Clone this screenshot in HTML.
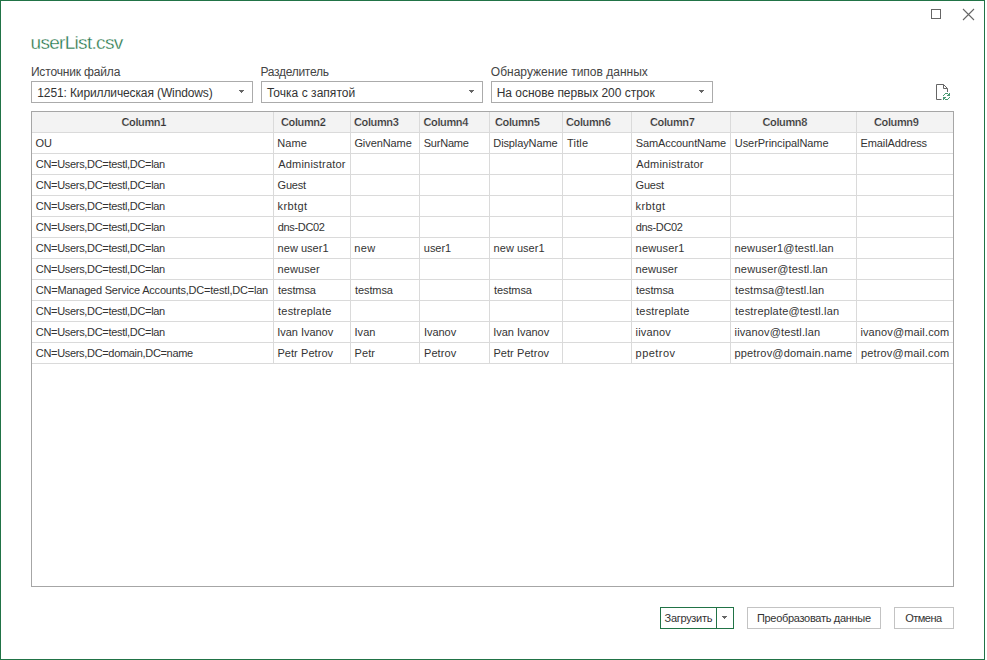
<!DOCTYPE html>
<html><head><meta charset="utf-8"><style>
html,body{margin:0;padding:0;background:#fff;}
body{width:987px;height:660px;position:relative;overflow:hidden;font-family:"Liberation Sans",sans-serif;}
.a{position:absolute;}
.t{position:absolute;white-space:pre;}
.win{left:0;top:0;width:985px;height:660px;box-sizing:border-box;border:1px solid #217346;}
.title{left:30.5px;top:31px;font-size:19px;line-height:24px;letter-spacing:-0.69px;color:#217346;-webkit-text-stroke:0.35px #fff;}
.lbl{font-size:12px;line-height:16px;color:#444;top:64px;}
.dd{top:81px;width:222px;height:22px;box-sizing:border-box;border:1px solid #ababab;background:#fff;}
.ddt{font-size:12px;line-height:16px;color:#333;}
.tbl{left:31px;top:111px;width:923px;height:476px;box-sizing:border-box;border:1px solid #a6a6a6;}
.hd{top:112px;height:20px;background:#f3f3f3;}
.hl{height:1px;background:#dadada;}
.vl{width:1px;background:#dadada;}
.ht{font-size:11px;font-weight:bold;color:#333;line-height:14px;top:115px;-webkit-text-stroke:0.2px #f3f3f3;}
.c{font-size:11px;line-height:14px;color:#333;}
.btn{top:607px;height:22px;box-sizing:border-box;border:1px solid #c3c3c3;background:#fff;}
.bt{font-size:11px;line-height:14px;color:#333;top:611px;}
</style></head><body>
<div class="a win"></div>
<div class="a" style="left:931px;top:9px;width:10px;height:10px;box-sizing:border-box;border:1px solid #666;"></div>
<svg class="a" style="left:962px;top:8px" width="13" height="13" viewBox="0 0 13 13"><path d="M1 1L12 12M12 1L1 12" stroke="#666" stroke-width="1.1" fill="none"/></svg>
<div class="t title">userList.csv</div>

<div class="t lbl" style="left:30.90px;letter-spacing:-0.154px">Источник файла</div>
<div class="a dd" style="left:31px"></div>
<div class="t ddt" style="left:37.30px;top:85px;letter-spacing:-0.118px">1251: Кириллическая (Windows)</div>
<div class="a" style="left:239px;top:90px;width:5px;height:1px;background:#666"></div><div class="a" style="left:240px;top:91px;width:3px;height:1px;background:#666"></div><div class="a" style="left:241px;top:92px;width:1px;height:1px;background:#666"></div>
<div class="t lbl" style="left:260.40px;letter-spacing:-0.270px">Разделитель</div>
<div class="a dd" style="left:261px"></div>
<div class="t ddt" style="left:266.90px;top:85px;letter-spacing:0.036px">Точка с запятой</div>
<div class="a" style="left:469px;top:90px;width:5px;height:1px;background:#666"></div><div class="a" style="left:470px;top:91px;width:3px;height:1px;background:#666"></div><div class="a" style="left:471px;top:92px;width:1px;height:1px;background:#666"></div>
<div class="t lbl" style="left:490.80px;letter-spacing:0.009px">Обнаружение типов данных</div>
<div class="a dd" style="left:491px"></div>
<div class="t ddt" style="left:496.70px;top:85px;letter-spacing:-0.020px">На основе первых 200 строк</div>
<div class="a" style="left:699px;top:90px;width:5px;height:1px;background:#666"></div><div class="a" style="left:700px;top:91px;width:3px;height:1px;background:#666"></div><div class="a" style="left:701px;top:92px;width:1px;height:1px;background:#666"></div>
<svg class="a" style="left:930px;top:80px" width="26" height="24" viewBox="930 80 26 24">
<path d="M941.5 99.5H936.5V84.5H943.5L947.5 88.5V92" stroke="#666" stroke-width="1" fill="none"/>
<path d="M943.5 84.5V88.5H947.5" stroke="#666" stroke-width="1" fill="none"/>
<g fill="#4a9a74" shape-rendering="crispEdges"><rect x="943" y="95" width="1" height="1"/><rect x="944" y="94" width="1" height="1"/><rect x="945" y="93" width="1" height="1"/><rect x="946" y="93" width="1" height="1"/><rect x="947" y="93" width="1" height="1"/><rect x="949" y="93" width="1" height="1"/><rect x="948" y="94" width="1" height="1"/><rect x="949" y="94" width="1" height="1"/><rect x="947" y="95" width="1" height="1"/><rect x="948" y="95" width="1" height="1"/><rect x="949" y="95" width="1" height="1"/><rect x="949" y="97" width="1" height="1"/><rect x="948" y="98" width="1" height="1"/><rect x="947" y="99" width="1" height="1"/><rect x="946" y="99" width="1" height="1"/><rect x="945" y="99" width="1" height="1"/><rect x="943" y="99" width="1" height="1"/><rect x="944" y="98" width="1" height="1"/><rect x="943" y="98" width="1" height="1"/><rect x="945" y="97" width="1" height="1"/><rect x="944" y="97" width="1" height="1"/><rect x="943" y="97" width="1" height="1"/></g>
</svg>
<div class="a tbl"></div>
<div class="a hd" style="left:32px;width:921px"></div>
<div class="a hl" style="left:32px;top:132px;width:921px"></div>
<div class="a hl" style="left:32px;top:153px;width:921px"></div>
<div class="a hl" style="left:32px;top:174px;width:921px"></div>
<div class="a hl" style="left:32px;top:195px;width:921px"></div>
<div class="a hl" style="left:32px;top:216px;width:921px"></div>
<div class="a hl" style="left:32px;top:237px;width:921px"></div>
<div class="a hl" style="left:32px;top:258px;width:921px"></div>
<div class="a hl" style="left:32px;top:279px;width:921px"></div>
<div class="a hl" style="left:32px;top:300px;width:921px"></div>
<div class="a hl" style="left:32px;top:321px;width:921px"></div>
<div class="a hl" style="left:32px;top:342px;width:921px"></div>
<div class="a hl" style="left:32px;top:363px;width:921px"></div>
<div class="a vl" style="left:273px;top:112px;height:252px"></div>
<div class="a vl" style="left:350px;top:112px;height:252px"></div>
<div class="a vl" style="left:419px;top:112px;height:252px"></div>
<div class="a vl" style="left:489px;top:112px;height:252px"></div>
<div class="a vl" style="left:562px;top:112px;height:252px"></div>
<div class="a vl" style="left:631px;top:112px;height:252px"></div>
<div class="a vl" style="left:730px;top:112px;height:252px"></div>
<div class="a vl" style="left:856px;top:112px;height:252px"></div>
<div class="t ht" style="left:121.50px;letter-spacing:-0.383px">Column1</div>
<div class="t ht" style="left:281.00px;letter-spacing:-0.383px">Column2</div>
<div class="t ht" style="left:354.00px;letter-spacing:-0.383px">Column3</div>
<div class="t ht" style="left:423.50px;letter-spacing:-0.383px">Column4</div>
<div class="t ht" style="left:495.00px;letter-spacing:-0.383px">Column5</div>
<div class="t ht" style="left:566.00px;letter-spacing:-0.383px">Column6</div>
<div class="t ht" style="left:650.00px;letter-spacing:-0.383px">Column7</div>
<div class="t ht" style="left:762.50px;letter-spacing:-0.383px">Column8</div>
<div class="t ht" style="left:874.00px;letter-spacing:-0.383px">Column9</div>
<div class="t c" style="left:35.60px;top:136px;letter-spacing:-0.100px">OU</div>
<div class="t c" style="left:277.30px;top:136px;letter-spacing:0.067px">Name</div>
<div class="t c" style="left:354.40px;top:136px;letter-spacing:-0.087px">GivenName</div>
<div class="t c" style="left:423.70px;top:136px;letter-spacing:-0.217px">SurName</div>
<div class="t c" style="left:493.30px;top:136px;letter-spacing:-0.110px">DisplayName</div>
<div class="t c" style="left:567.10px;top:136px;letter-spacing:0.150px">Title</div>
<div class="t c" style="left:635.80px;top:136px;letter-spacing:-0.108px">SamAccountName</div>
<div class="t c" style="left:734.80px;top:136px;letter-spacing:-0.062px">UserPrincipalName</div>
<div class="t c" style="left:860.60px;top:136px;letter-spacing:-0.127px">EmailAddress</div>
<div class="t c" style="left:35.80px;top:157px;letter-spacing:-0.313px">CN=Users,DC=testl,DC=lan</div>
<div class="t c" style="left:278.20px;top:157px;letter-spacing:0.208px">Administrator</div>
<div class="t c" style="left:636.20px;top:157px;letter-spacing:0.208px">Administrator</div>
<div class="t c" style="left:35.80px;top:178px;letter-spacing:-0.313px">CN=Users,DC=testl,DC=lan</div>
<div class="t c" style="left:277.60px;top:178px;letter-spacing:-0.200px">Guest</div>
<div class="t c" style="left:635.60px;top:178px;letter-spacing:-0.200px">Guest</div>
<div class="t c" style="left:35.80px;top:199px;letter-spacing:-0.313px">CN=Users,DC=testl,DC=lan</div>
<div class="t c" style="left:277.50px;top:199px;letter-spacing:0.420px">krbtgt</div>
<div class="t c" style="left:635.50px;top:199px;letter-spacing:0.420px">krbtgt</div>
<div class="t c" style="left:35.80px;top:220px;letter-spacing:-0.313px">CN=Users,DC=testl,DC=lan</div>
<div class="t c" style="left:277.70px;top:220px;letter-spacing:-0.329px">dns-DC02</div>
<div class="t c" style="left:635.70px;top:220px;letter-spacing:-0.329px">dns-DC02</div>
<div class="t c" style="left:35.80px;top:241px;letter-spacing:-0.313px">CN=Users,DC=testl,DC=lan</div>
<div class="t c" style="left:277.60px;top:241px;letter-spacing:0.025px">new user1</div>
<div class="t c" style="left:354.30px;top:241px;letter-spacing:0.350px">new</div>
<div class="t c" style="left:423.80px;top:241px;letter-spacing:-0.025px">user1</div>
<div class="t c" style="left:493.60px;top:241px;letter-spacing:0.025px">new user1</div>
<div class="t c" style="left:635.60px;top:241px;letter-spacing:0.171px">newuser1</div>
<div class="t c" style="left:734.60px;top:241px;letter-spacing:0.135px">newuser1@testl.lan</div>
<div class="t c" style="left:35.80px;top:262px;letter-spacing:-0.313px">CN=Users,DC=testl,DC=lan</div>
<div class="t c" style="left:277.60px;top:262px;letter-spacing:0.067px">newuser</div>
<div class="t c" style="left:635.60px;top:262px;letter-spacing:0.067px">newuser</div>
<div class="t c" style="left:734.60px;top:262px;letter-spacing:0.150px">newuser@testl.lan</div>
<div class="t c" style="left:35.80px;top:283px;letter-spacing:-0.210px">CN=Managed Service Accounts,DC=testl,DC=lan</div>
<div class="t c" style="left:278.10px;top:283px;letter-spacing:-0.117px">testmsa</div>
<div class="t c" style="left:355.10px;top:283px;letter-spacing:-0.117px">testmsa</div>
<div class="t c" style="left:494.10px;top:283px;letter-spacing:-0.117px">testmsa</div>
<div class="t c" style="left:636.10px;top:283px;letter-spacing:-0.117px">testmsa</div>
<div class="t c" style="left:735.10px;top:283px;letter-spacing:0.094px">testmsa@testl.lan</div>
<div class="t c" style="left:35.80px;top:304px;letter-spacing:-0.313px">CN=Users,DC=testl,DC=lan</div>
<div class="t c" style="left:278.10px;top:304px;letter-spacing:0.180px">testreplate</div>
<div class="t c" style="left:636.10px;top:304px;letter-spacing:0.180px">testreplate</div>
<div class="t c" style="left:735.10px;top:304px;letter-spacing:0.180px">testreplate@testl.lan</div>
<div class="t c" style="left:35.80px;top:325px;letter-spacing:-0.313px">CN=Users,DC=testl,DC=lan</div>
<div class="t c" style="left:277.30px;top:325px;letter-spacing:-0.040px">Ivan Ivanov</div>
<div class="t c" style="left:354.40px;top:325px;letter-spacing:0.100px">Ivan</div>
<div class="t c" style="left:423.90px;top:325px;letter-spacing:-0.020px">Ivanov</div>
<div class="t c" style="left:493.30px;top:325px;letter-spacing:-0.040px">Ivan Ivanov</div>
<div class="t c" style="left:635.60px;top:325px;letter-spacing:0.150px">iivanov</div>
<div class="t c" style="left:734.60px;top:325px;letter-spacing:0.131px">iivanov@testl.lan</div>
<div class="t c" style="left:860.40px;top:325px;letter-spacing:0.129px">ivanov@mail.com</div>
<div class="t c" style="left:35.80px;top:346px;letter-spacing:-0.320px">CN=Users,DC=domain,DC=name</div>
<div class="t c" style="left:277.40px;top:346px;letter-spacing:0.070px">Petr Petrov</div>
<div class="t c" style="left:354.50px;top:346px;letter-spacing:0.100px">Petr</div>
<div class="t c" style="left:424.00px;top:346px;letter-spacing:0.080px">Petrov</div>
<div class="t c" style="left:493.40px;top:346px;letter-spacing:0.070px">Petr Petrov</div>
<div class="t c" style="left:635.60px;top:346px;letter-spacing:0.450px">ppetrov</div>
<div class="t c" style="left:734.40px;top:346px;letter-spacing:0.178px">ppetrov@domain.name</div>
<div class="t c" style="left:860.90px;top:346px;letter-spacing:0.179px">petrov@mail.com</div>
<div class="a btn" style="left:660px;width:74px;border-color:#217346"></div>
<div class="a" style="left:716px;top:607px;width:1px;height:22px;background:#217346"></div>
<div class="t bt" style="left:664.60px;letter-spacing:-0.300px">Загрузить</div>
<div class="a" style="left:722px;top:616px;width:5px;height:1px;background:#666"></div><div class="a" style="left:723px;top:617px;width:3px;height:1px;background:#666"></div><div class="a" style="left:724px;top:618px;width:1px;height:1px;background:#666"></div>
<div class="a btn" style="left:747px;width:134px"></div>
<div class="t bt" style="left:756.90px;letter-spacing:-0.300px">Преобразовать данные</div>
<div class="a btn" style="left:894px;width:60px"></div>
<div class="t bt" style="left:905.20px;letter-spacing:-0.500px">Отмена</div>
</body></html>
